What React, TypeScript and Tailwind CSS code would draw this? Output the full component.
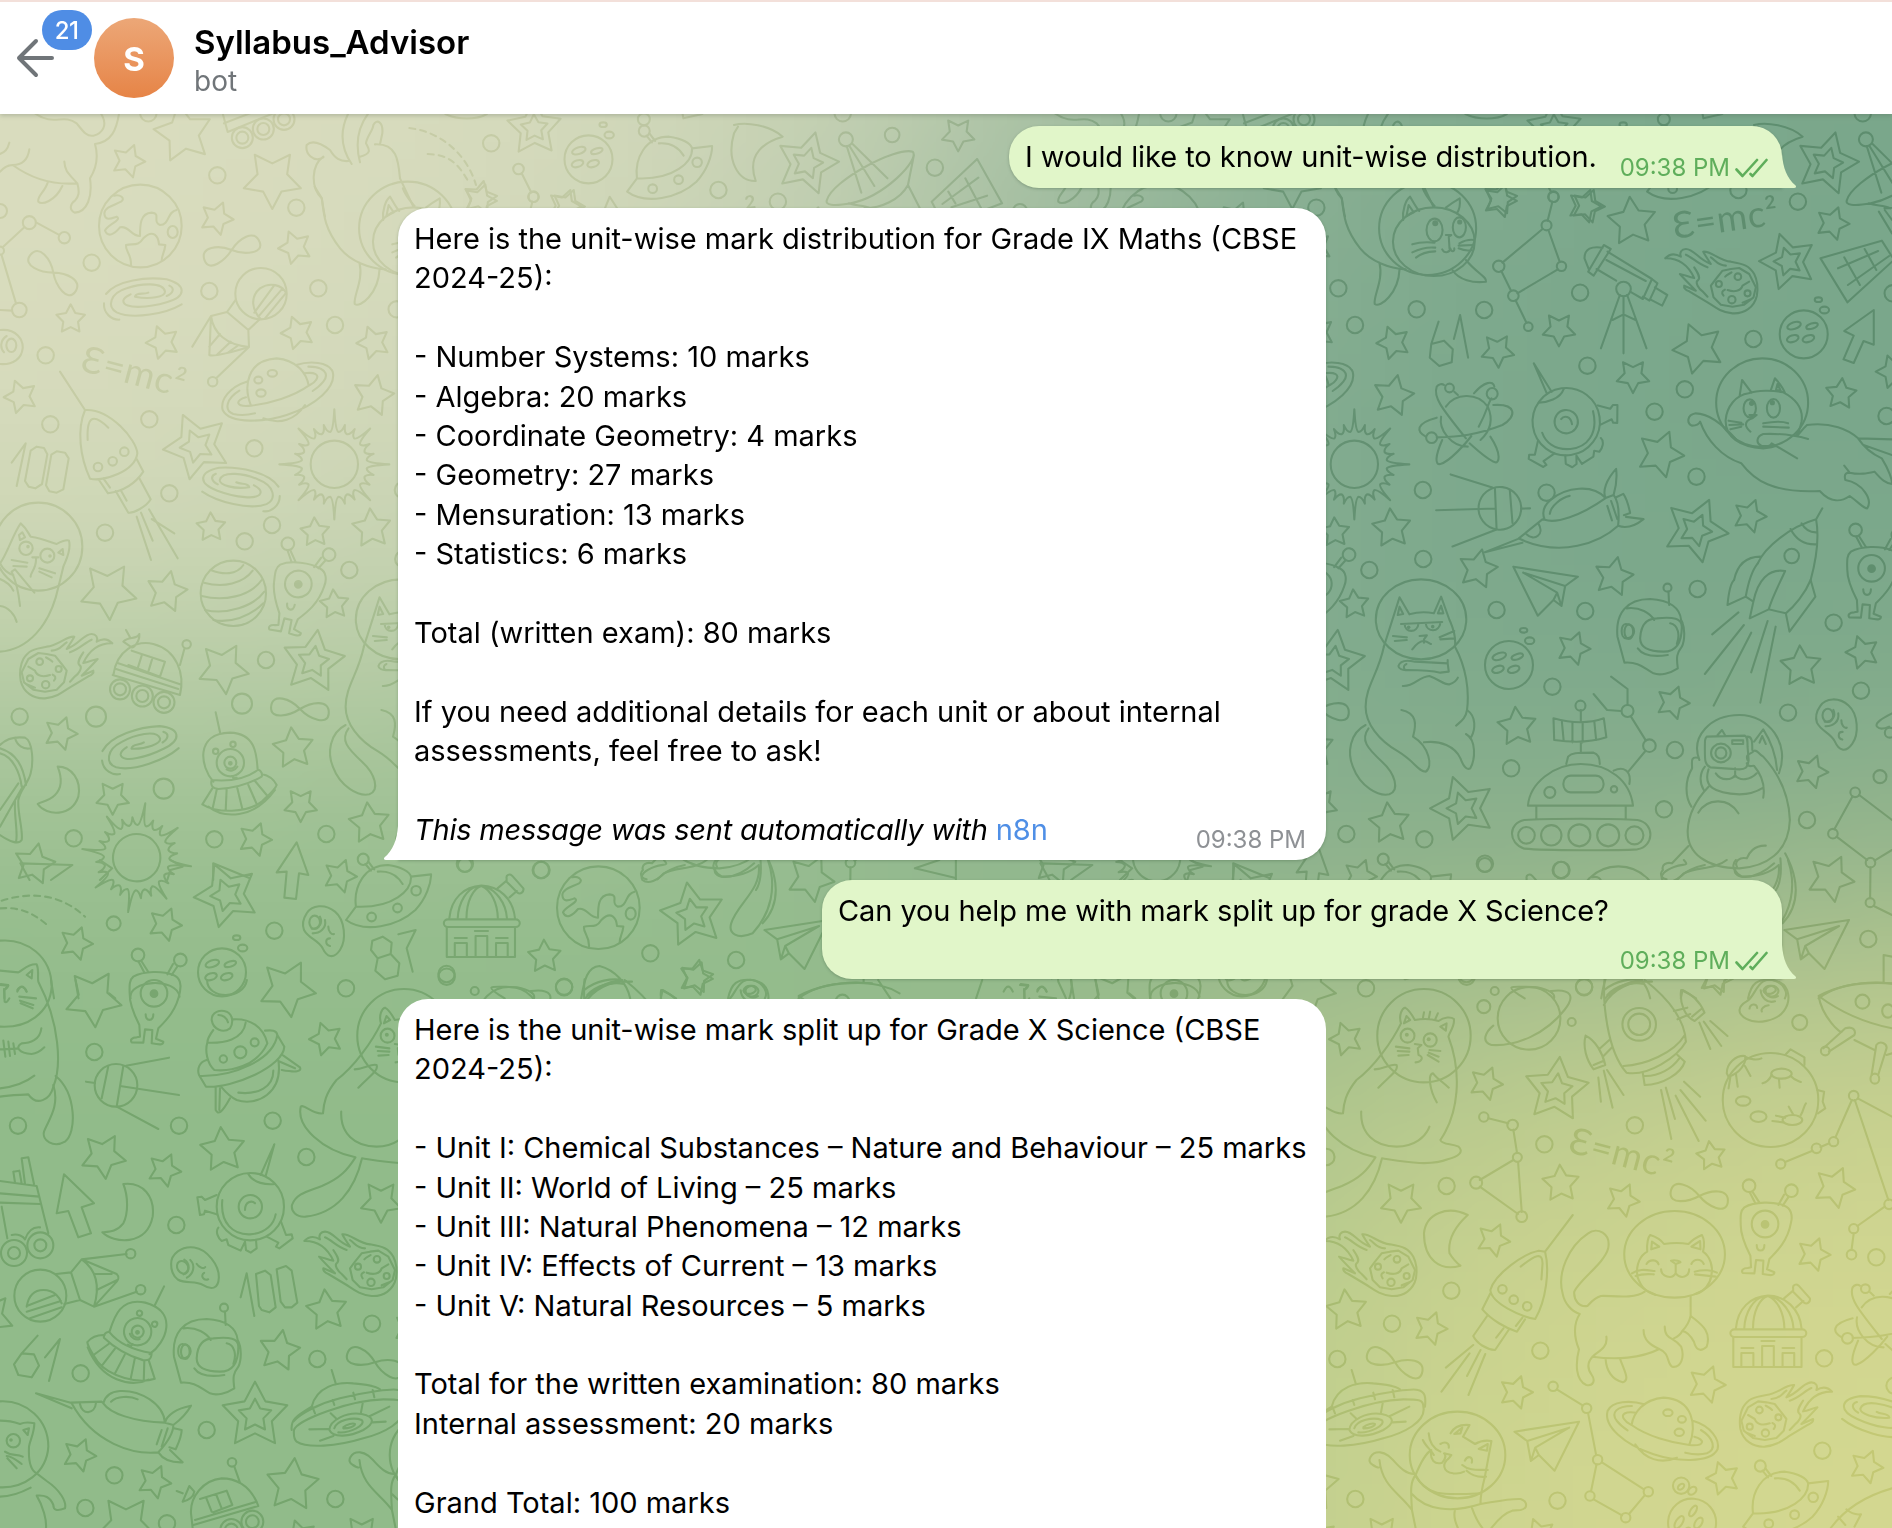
import React, { useEffect, useRef } from "react";

type Frame = { ox: number; oy: number; sx: number; sy: number };
const T = 1 / 3;
const A: Frame = { ox: 0, oy: 0, sx: T, sy: T };
const B: Frame = { ox: 0, oy: 110, sx: T, sy: T };
const C: Frame = { ox: 0, oy: 500, sx: T, sy: T };
const D: Frame = { ox: 0, oy: 880, sx: T, sy: T };
const E: Frame = { ox: 0, oy: 1200, sx: T, sy: T };
const F: Frame = { ox: 1320, oy: 180, sx: 0.3648, sy: T };
const G: Frame = { ox: 1320, oy: 560, sx: 0.3648, sy: T };
const H: Frame = { ox: 1320, oy: 940, sx: 0.3648, sy: T };
const I: Frame = { ox: 1320, oy: 1220, sx: 0.3648, sy: T };
const J: Frame = { ox: 370, oy: 780, sx: 0.6122, sy: T };
const K: Frame = { ox: 390, oy: 100, sx: 0.3954, sy: T };

const px = (f: Frame, x: number) => f.ox + x * f.sx;
const py = (f: Frame, y: number) => f.oy + y * f.sy;

/* x, y, radius, rotation, 1 when the star is doubled */
type S = [number, number, number, number, number?];
const stars: [Frame, S[]][] = [
  [B, [[385, 153, 17, 20], [550, 70, 30, 62], [817, 207, 30, 36], [650, 325, 17, 22], [885, 412, 17, -22], [212, 628, 15, 0], [488, 697, 17, -20], [893, 668, 17, -20], [1120, 698, 17, -20], [1120, 857, 21, 12], [62, 860, 17, -20], [590, 1008, 34, -24, 1]]],
  [C, [[633, 82, 15, -2], [945, 97, 15, -3], [1115, 85, 20, -5], [325, 273, 29, 33], [500, 275, 21, 12], [1003, 313, 15, -5], [670, 505, 26, 30], [940, 485, 32, 8, 1], [182, 700, 17, 20], [880, 745, 21, -6], [338, 893, 17, 36], [902, 915, 17, 36], [765, 1018, 17, 20], [1108, 970, 21, -6], [103, 1092, 21, 12], [1020, 1128, 17, 20]]],
  [D, [[680, 45, 33, -22, 1], [495, 133, 17, 22], [228, 190, 17, 20], [280, 355, 29, 32], [862, 325, 29, 28], [978, 477, 17, -19], [310, 828, 23, 30], [493, 870, 17, 24], [668, 810, 23, -5], [1143, 965, 21, 36]]],
  [E, [[980, 331, 21, -6], [838, 452, 21, 10], [765, 647, 34, 0, 1], [238, 765, 17, 22], [463, 845, 17, 24], [877, 855, 27, 5], [378, 975, 30, 36], [-30, 350, 24, 40], [900, 1010, 17, -18], [1085, 1003, 19, 36]]],
  [F, [[493, 62, 17, 19], [725, 78, 17, 20], [855, 125, 25, -5], [1405, 130, 17, 20], [1283, 245, 29, -17, 1], [487, 512, 17, 33], [655, 448, 17, 36], [1037, 505, 26, 50], [858, 588, 17, 36], [1428, 642, 16, 5], [933, 822, 24, 22], [1178, 1008, 17, 20], [1030, 1050, 33, 24, 1], [1570, 575, 17, -18]]],
  [G, [[433, 27, 20, 12], [805, 50, 20, 12], [695, 265, 17, 20], [1318, 319, 21, -3], [1487, 277, 17, -18], [967, 428, 17, 20], [540, 500, 20, -5], [1347, 635, 17, 20], [392, 745, 33, -18, 1], [1400, 955, 24, 26]]],
  [H, [[455, 430, 17, 22], [648, 449, 33, 6, 1], [1085, 115, 17, 20], [1072, 648, 15, -8], [660, 731, 19, -3], [830, 780, 17, 24], [1410, 742, 21, 24]]],
  [I, [[475, 60, 17, 24], [1353, 103, 17, 20], [303, 325, 17, 20], [537, 517, 17, 18], [1060, 493, 19, 20], [1105, 775, 17, -18], [1498, 740, 17, 22], [600, 945, 17, -20]]],
  [J, [[527, 405, 33, -10, 1], [285, 530, 17, -2], [533, 590, 17, 10]]],
  [K, [[1055, 190, 32, 15, 1], [1437, 103, 17, 36], [365, 85, 28, -2, 1], [228, 293, 17, 12], [450, 318, 17, 20]]],
];

/* x, y, radius */
type O = [number, number, number?];
const dots: [Frame, O[]][] = [
  [B, [[652, 196], [889, 293], [275, 458], [628, 543], [955, 535], [1005, 645], [137, 736], [151, 943], [448, 928], [763, 1015], [508, 1150], [445, 10], [0, 303, 7], [88, 338, 6.5], [193, 383, 5.7], [58, 600, 7.3], [0, 422, 4], [638, 815, 4.7], [783, 551, 25.7], [373, 1025, 4.3], [338, 1054, 4.3], [294, 1071, 4.3], [727, 83, 10.5], [727, 83, 6], [790, 57, 10.5], [790, 57, 6], [852, 28, 10.5], [852, 28, 6]]],
  [C, [[315, 98], [734, 124], [816, 75], [1048, 210], [798, 480], [59, 650], [288, 650, 10], [726, 611, 10], [491, 866, 10], [221, 1015], [643, 1018], [979, 1002], [115, 140, 44], [78, 145, 6.7], [142, 167, 7], [560, 433, 4.2], [360, 568, 10], [360, 568, 6], [427, 588, 10.5], [427, 588, 6], [492, 607, 10.5], [492, 607, 6], [700, 280, 32.7]]],
  [D, [[341, 130, 7], [823, 152], [1038, 325], [283, 516], [54, 737], [537, 737], [818, 722], [919, 831], [529, 1035], [670, 537, 3.7], [721, 517, 6], [764, 487, 4]]],
  [E, [[1116, 371], [952, 477], [242, 520], [620, 690], [343, 826], [256, 924], [501, 970], [1006, 897], [42, 159, 13], [42, 159, 6], [121, 136, 13], [121, 136, 6], [121, 287, 26], [392, 161, 4.7], [422, 269, 4.7], [40, 722, 6.7], [696, 787, 4.3], [757, 965, 11], [757, 965, 6.4], [694, 990, 11], [694, 990, 6.4]]],
  [F, [[713, 338], [265, 388], [450, 390], [733, 557], [1188, 477], [1000, 628], [917, 695], [1032, 890], [282, 930], [621, 938], [1310, 65], [1147, 30], [1553, 708], [283, 1137], [1570, 340], [640, 50, 5.3], [621, 136, 5], [490, 259, 5.7], [662, 259, 4.7], [530, 347, 5.3], [571, 440, 4.3], [832, 327, 7.3], [1293, 1128, 7.3]]],
  [G, [[484, 150], [727, 153], [1035, 87], [637, 380], [973, 570], [1408, 188], [1483, 392], [1283, 458], [524, 625], [943, 748], [1335, 780], [1535, 650, 6.5], [286, 838], [452, 911], [662, 930], [1503, 1137], [714, 437, 5], [843, 453, 6], [903, 557, 6.3], [630, 697, 5.5], [806, 688, 3.2], [566, 826, 8.3], [634, 826, 10.2], [711, 826, 11], [790, 826, 11], [862, 826, 9], [1467, 697, 4.8], [1406, 821, 4.8], [1509, 908, 4.8], [1508, 1028, 4.5], [1562, 518, 5]]],
  [H, [[479, 153, 4], [449, 200, 6.5], [724, 142], [690, 246, 4], [1315, 247, 7.5], [615, 613], [863, 556], [347, 738], [402, 110], [449, 531, 4.7], [528, 555, 5.3], [541, 652, 4.5], [428, 728, 6], [553, 830, 5.4], [1263, 672, 4.6], [1361, 625, 4.8], [1408, 605, 4.6], [1463, 467, 4.8], [1560, 793, 4.8], [1463, 866, 4.6]]],
  [I, [[360, 212], [604, 392], [1382, 415], [1377, 692], [990, 797], [651, 842], [1525, 112], [1575, 497], [1457, 104, 4.8], [639, 499, 4.7], [731, 565, 4.7], [761, 719, 4.7], [740, 828, 4.7], [900, 815, 4.7], [838, 893, 4.7], [500, 208, 4.3], [531, 239, 4.3], [568, 259, 4.3]]],
  [J, [[279, 270], [125, 582], [458, 520], [598, 540], [317, 620], [155, 255, 7]]],
  [K, [[256, 130], [1270, 105, 7.3], [1378, 203], [325, 207, 5.3], [363, 291, 5], [1153, 118, 7], [1145, 40], [642, 58, 6]]],
];

/* x, y, rx, ry in frame units */
const ovals: [Frame, number[][]][] = [
  [B, [[34, 706, 15, 20]]],
  [F, [[295, 145, 133, 140], [312, 185, 112, 103], [314, 150, 22, 34], [382, 142, 18, 30], [1212, 668, 126, 133], [1178, 685, 17, 27], [1243, 685, 18, 28]]],
  [G, [[277, 178, 124, 120], [1099, 579, 27, 28], [1099, 579, 15, 17]]],
  [H, [[285, 287, 128, 140], [240, 287, 19, 21], [302, 300, 18, 20], [573, 235, 86, 94], [875, 253, 46, 49], [875, 253, 30, 32], [1487, 185, 19, 21], [1557, 213, 16, 20], [1385, 333, 12, 13], [1521, 416, 12, 15], [1235, 480, 131, 141], [1265, 401, 28, 15], [1160, 483, 20, 14], [1202, 530, 22, 16], [1295, 540, 27, 15]]],
  [I, [[972, 103, 138, 130], [377, 705, 131, 130]]],
];

const pupils: [Frame, number[][]][] = [
  [C, [[84, 140, 1.8], [150, 168, 1.8]]],
  [E, [[33, 720, 1.8]]],
  [F, [[316, 130, 3], [383, 126, 2.6], [1183, 670, 2.6], [1240, 668, 2.6]]],
  [G, [[243, 202, 1.8], [309, 200, 1.8]]],
  [H, [[238, 284, 2], [298, 298, 2]]],
];

const lines: [Frame, string][] = [
  [B, "M105 10C160 50 190 10 230 40C250 65 260 80 280 77C310 70 320 45 308 20L300 5M358 5C350 60 335 95 285 102C293 130 295 165 270 205C278 260 262 305 225 308C205 300 212 280 225 272C235 260 240 250 232 220C170 225 100 210 38 165C20 165 10 175 0 185M28 98C22 120 15 125 0 132M88 118C84 145 70 165 38 165M193 155C195 185 205 190 232 220M143 218C135 245 110 260 115 275C125 285 165 275 187 228"],
  [B, "M73 352L8 412M108 337L176 374M5 436L48 580M0 600L36 602"],
  [B, "M763 608L822 527M775 620L848 535M795 625L857 550M782 627C755 600 750 560 780 535C810 515 845 525 858 548M708 568L681 606L745 660L780 627M633 618L681 606M633 618L577 710M633 618C640 670 680 705 747 711L745 660M633 618L628 735C640 742 700 725 747 711L650 803M628 710L660 672M650 735L692 695M685 727L712 708"],
  [B, "M180 785L255 900C330 895 410 990 412 1030C405 1085 310 1115 270 1106C240 1040 230 960 255 900M263 990C260 925 275 905 325 953M410 1047L430 1085C400 1130 360 1145 324 1150L297 1110M310 1105L330 1133M418 1105L452 1168M347 1143L385 1208C400 1210 440 1190 452 1168M362 1140L380 1172"],
  [B, "M35 1058L77 1000L50 1128M110 1010L132 1014L142 1033L126 1122L106 1135L86 1130L75 1113L92 1022ZM170 1024L195 1028L206 1045L190 1138L170 1148L148 1144L138 1126L154 1034Z"],
  [B, "M668 10L683 66L820 10M672 40L750 10"],
  [B, "M970 140C935 165 930 230 965 265C970 290 972 310 975 320M970 142C940 160 915 130 920 105C940 85 970 105 990 120C1005 145 1020 155 1045 153M1055 162C1020 110 1020 60 1045 10M1080 157C1065 100 1075 50 1105 10M1080 140C1120 130 1105 115 1098 100C1100 80 1120 60 1120 45C1130 25 1150 35 1147 70L1140 103M1125 103C1190 100 1195 150 1200 205L1240 290"],
  [B, "M0 660C50 655 70 690 68 715C65 745 40 765 0 762M20 678C0 690 0 715 12 727"],
  [C, "M410 50L453 180M423 38L458 122M447 28L533 175M455 57L523 100"],
  [C, "M0 190C20 165 40 100 62 70C80 85 85 100 92 110C130 115 160 130 170 132C180 125 200 118 207 122C215 155 195 185 190 200L175 262C150 380 80 450 0 455M60 120L57 105L67 97L75 112ZM175 158L188 147L190 165Z"],
  [C, "M35 180L82 188M40 198L80 200M118 205L165 220M118 215L155 232M97 172L115 172M108 175C110 205 90 220 92 230M0 190C10 210 20 220 40 225M103 278L45 208L35 215C55 260 58 300 60 318M0 237C20 245 35 260 40 272M0 318C25 320 45 345 50 366"],
  [C, "M340 525C350 450 410 420 460 432C530 450 555 520 540 585L338 525M348 507L535 567M355 490L540 553M395 452L495 485L480 530L385 495M425 467L413 505M457 475L445 515M378 390L390 412M370 425C385 408 410 420 418 402C420 425 400 445 395 442ZM540 495L553 447"],
  [C, "M0 735C20 715 50 710 75 713C100 725 100 790 92 820C85 850 60 870 55 900C52 940 70 990 65 1020C55 1035 30 1025 0 1005M45 713C50 735 70 750 92 745M0 745C50 760 70 800 78 855M0 760C40 770 60 820 65 860M0 930L55 850M0 980L68 860M45 905C42 950 55 1000 48 1025"],
  [C, "M173 800C185 830 190 860 165 885C145 905 120 905 113 912C140 950 215 950 235 890C245 840 215 800 173 800Z"],
  [C, "M890 1027L925 1125L897 1120L888 1197L853 1193L860 1115L830 1117Z"],
  [C, "M632 210C670 225 710 225 730 195M612 248C670 265 730 250 758 212M605 288C670 305 750 290 785 240M615 330C680 345 760 320 793 275M640 360C690 370 750 350 790 310"],
  [D, "M0 182C80 175 155 230 155 320C150 400 80 445 0 440M0 272L55 277C70 270 85 250 110 253C118 270 112 290 115 305C180 430 185 560 160 620C150 660 110 680 85 643C60 645 30 645 0 650M80 285L97 270L95 295ZM52 330C60 315 75 320 80 335M58 350L108 355M60 362L100 375M62 370L98 385M0 315L25 317C22 325 15 330 12 327L14 365C20 370 25 360 28 355"],
  [D, "M124 445C120 480 90 490 65 490C45 500 55 520 95 522C115 520 125 510 133 502M0 508L55 505M10 482L16 530M25 485L30 528M40 490L45 522M0 625C50 620 80 605 103 587M167 588C230 640 230 760 195 785C160 805 125 780 132 755C145 720 180 680 160 615"],
  [D, "M1148 170L1175 188L1172 222L1133 235L1113 210L1117 182ZM1172 222L1198 250L1193 287L1155 298L1126 272L1133 235M1195 163L1247 150L1220 205L1238 275"],
  [D, "M635 420C635 395 660 388 680 395C700 405 700 430 690 445C670 460 640 450 635 420M655 405C670 405 680 415 684 427M700 418C750 415 790 440 802 490C770 560 690 575 643 570C620 550 615 510 622 488C670 490 730 480 737 428M640 450C625 470 622 480 622 488M795 452C815 450 830 450 832 465L853 500C850 560 700 625 618 620L597 585C590 565 600 545 620 540M832 465C820 540 700 590 600 588M835 540C850 640 770 680 710 660C690 650 680 640 665 622M820 572C820 620 775 645 715 638M845 523L900 562C905 575 890 578 845 570M840 545L885 565M647 622L647 690C655 705 665 700 690 655M660 625L658 690"],
  [D, "M0 903L110 918L135 1020M0 940L118 950M0 968L120 972M65 835L85 832L102 912M40 875L58 872L65 910M65 835L75 912M40 875L45 907M192 883L170 1000L205 993L235 1072L273 1060L245 982L282 970ZM370 912C385 950 385 1000 370 1030C350 1055 330 1055 307 1057C340 1090 440 1100 458 1010C465 950 430 905 370 912Z"],
  [E, "M135 60L145 100M5 20L22 115M35 105C55 100 70 110 75 118C85 90 100 80 120 82"],
  [E, "M80 320C85 290 100 270 130 270C165 270 180 295 185 310M80 318L165 285M80 335L183 303M90 355L185 322M168 222L213 217M193 312L240 300M213 217L245 178L380 162M213 217L240 300L282 320L410 275M245 178C290 210 300 260 282 320M245 178L350 222C358 230 355 240 350 245L282 320M282 222L335 222M290 270L352 240"],
  [E, "M722 292L740 220L763 348M768 222L795 212L812 225L827 322L808 337L785 330L777 318ZM830 208L858 198L875 212L892 308L875 322L855 322L842 305Z"],
  [E, "M113 407L65 460L102 463L117 497L95 532L55 525L42 493L65 460M135 472L180 417L147 543"],
  [E, "M880 665C900 640 960 610 1020 595C1100 575 1180 565 1194 570C1215 575 1218 590 1215 620M875 690C872 660 885 650 935 620C950 560 1010 545 1060 550C1100 553 1130 560 1140 568M890 725C920 745 1010 740 1090 715C1150 700 1220 665 1210 620C1210 600 1200 598 1150 598C1050 600 890 660 882 690C880 710 885 720 890 725M995 510L1008 553M937 620L945 640M998 600L1003 615M1060 578L1065 598M1118 570L1123 592M928 688L985 687M992 640L1010 657M1083 637L1088 610M1110 648L1168 620M1118 667L1157 665M960 722L1000 708M988 690C990 660 1040 635 1085 642C1125 650 1125 670 1090 690C1050 710 1000 715 988 690M1003 685C1010 660 1060 650 1085 660C1100 675 1050 700 1015 697M1030 682C1040 672 1060 668 1065 672C1065 680 1045 685 1030 685"],
  [E, "M0 604C80 600 145 660 145 740C140 820 70 865 0 862M0 890C30 890 60 880 92 863M0 662C20 662 40 665 60 672C75 665 95 668 103 670C103 700 90 720 87 740C85 780 90 810 110 820L140 843C180 870 200 905 195 925C170 935 160 930 160 915C150 890 135 885 110 887C130 920 140 960 138 984M70 690L87 685L83 705ZM15 755C35 770 50 760 68 770M20 768C40 770 55 785 65 792M22 775L50 805"],
  [E, "M703 800L720 848M775 918C750 850 700 835 665 835C610 840 570 890 573 940L578 984M775 918L580 975M770 905L585 960M530 873L548 880M548 905L568 858L583 875C580 890 570 900 548 905M600 897L680 872L697 915L640 937M618 892L635 935M648 882L665 925"],
  [F, "M228 120C225 90 235 60 247 50C255 65 265 85 272 93M237 108L243 75L257 97ZM345 83C360 70 375 60 383 55C385 75 382 90 375 100M345 165L360 165L353 170L355 205M335 208C340 220 355 220 357 205C360 218 370 215 368 205M253 193C270 187 290 185 314 188M253 217C270 208 290 200 316 203M263 233C275 222 290 215 316 214M382 190C395 182 410 178 422 180M380 197L420 195M380 205C395 212 410 212 416 210M40 20L60 55C65 110 70 150 110 205C140 245 190 265 235 268M163 248C175 300 145 350 150 372C165 385 215 340 218 268M363 270C380 300 420 310 455 305C458 290 430 280 400 240M282 25C290 50 305 65 314 78"],
  [F, "M637 65L624 122M610 147L500 248M626 150L657 245M497 273L524 333M541 340L652 268M536 361L566 428"],
  [F, "M737 268L725 235C725 205 745 198 775 203M778 195L797 207L750 287L735 275L778 195M785 240L893 303M788 215L910 297L885 357L850 335M758 267L812 302M910 297L925 310L903 362L885 350M918 322L952 345L938 377L905 358M822 345L770 505M832 350L832 520M842 345L895 505M802 420L832 403L865 420"],
  [F, "M1372 235L1540 182L1568 230M1372 235L1446 367L1568 245M1420 265L1530 213M1447 315L1560 228M1437 232L1480 315M1493 207L1525 270M1548 90L1568 120M1532 95L1568 160"],
  [F, "M325 425L305 492L340 482L364 508L361 547L327 558L301 533L305 492M367 477L384 405L406 533M1518 390L1437 453L1463 467L1435 538L1463 549L1490 483L1518 494Z"],
  [F, "M1215 805C1150 800 1110 770 1112 720C1115 680 1140 645 1175 640C1200 630 1240 630 1270 637C1310 660 1325 690 1320 725C1315 750 1310 760 1305 765M1150 650L1157 600L1183 638M1235 633L1247 595C1260 610 1270 625 1275 640M1250 630L1254 612L1263 632ZM1177 705L1197 705L1185 715C1160 725 1165 740 1180 755M1120 722L1155 728M1122 735L1160 733M1125 748L1155 740M1215 730C1240 725 1265 722 1283 730M1215 740L1285 743M1335 735C1400 725 1450 750 1475 775C1490 800 1510 820 1540 835C1560 870 1568 900 1568 910M1475 775L1568 778M1490 795L1568 825M1335 735C1325 745 1318 755 1310 765M1338 777C1300 765 1260 760 1215 762C1195 770 1195 790 1210 797C1225 800 1235 797 1238 790L1308 835M1215 805C1230 803 1240 802 1250 798M1142 780C1110 740 1070 700 1030 700C1005 705 1005 730 1020 737C1035 737 1040 730 1042 725C1060 780 1100 830 1155 850C1190 900 1240 940 1370 933C1400 970 1430 965 1452 948C1480 970 1490 985 1500 985C1515 960 1490 910 1440 900C1435 880 1445 878 1452 878C1480 885 1500 880 1520 875C1540 900 1550 910 1568 912M1437 857L1452 878"],
  [F, "M1377 985L1360 1018C1290 1040 1220 1100 1200 1150M1360 1018C1370 1080 1360 1140 1345 1200M1290 1047C1305 1080 1330 1095 1362 1093M1320 1030C1330 1050 1345 1058 1362 1057M1207 1130C1170 1130 1145 1150 1135 1200"],
  [G, "M1200 10C1185 30 1175 60 1167 110L1117 135C1120 100 1125 70 1135 60M1345 60L1358 110L1287 215L1277 160M1345 60C1330 100 1300 140 1277 160L1230 148M1275 33C1230 25 1200 60 1188 125L1178 175L1230 148C1240 110 1260 70 1275 33M1167 110L1188 125M1147 157L1075 223M1162 195L1055 342M1182 218L1079 437M1227 183L1182 337M1249 200L1207 428"],
  [G, "M175 260L218 112L245 163C270 155 290 155 312 160L332 110L355 180C370 215 372 240 370 260C400 320 410 390 403 450C400 475 385 485 373 497M213 165L218 140L228 162ZM323 160L332 137L338 160ZM222 192L335 186M232 192C232 220 268 220 270 190M290 190C292 218 328 218 330 188M273 228L293 226L285 238L285 248M253 268C265 250 275 243 285 243C295 245 300 250 304 252M200 228L238 232M205 243L238 240M328 232L368 213M330 238L368 235"],
  [G, "M175 260C160 340 125 380 125 440C125 490 160 540 215 575C260 605 270 635 290 635C310 620 300 560 255 530C265 490 265 460 223 450M285 547C330 540 370 560 385 595C395 625 405 630 412 625C425 600 430 540 400 522M403 450C430 470 425 510 415 530M125 495C80 520 75 580 90 620C110 680 160 710 190 703C220 690 205 640 170 605C130 565 110 540 133 505M215 318C220 300 240 300 260 305L350 310L353 335L330 338C300 330 270 330 240 330C225 332 215 325 215 318M227 378C260 380 270 350 300 348C330 360 340 375 355 373C370 368 375 360 378 353M237 312C230 315 228 322 232 328M350 300L350 312"],
  [G, "M570 737C575 670 640 612 715 612C790 612 850 660 858 737ZM593 740L593 777M838 740L838 777M675 612L680 590C690 578 700 578 750 578C765 582 767 600 767 612M715 545L715 578M715 450L715 485M640 475C690 490 740 490 778 475L785 532C740 548 690 548 642 540ZM663 485L668 542M692 488L692 547M720 488L720 547M752 485L757 540M805 632C830 618 855 630 848 672M845 635L892 573M893 541L852 469M843 435L843 387L798 350M825 453L787 450L750 402M560 780C620 775 810 775 870 780C920 790 915 860 870 868C810 872 620 872 560 866C515 850 515 790 560 780ZM688 647L755 647C785 647 785 697 755 697L688 697C660 697 660 647 688 647Z"],
  [G, "M1040 600C1015 530 1070 465 1150 465C1230 465 1290 550 1258 640M1060 530L1165 527C1172 530 1172 540 1172 560L1175 600C1172 625 1165 628 1150 628L1070 622C1055 615 1055 600 1055 570C1055 540 1055 535 1060 530ZM1172 530C1185 530 1185 545 1185 570M1130 541L1160 541L1160 552L1130 552ZM1090 525L1102 510L1110 525M1190 545L1215 508C1240 550 1250 590 1253 630M1205 548L1212 528L1222 552M1170 610C1175 625 1185 615 1190 618C1215 650 1220 680 1215 713M1172 600C1165 580 1180 585 1190 572C1200 570 1200 580 1215 590C1240 620 1285 680 1288 780C1285 880 1220 920 1150 925C1060 925 1005 880 1008 810C1010 760 1030 720 1065 680M1035 593C1015 590 1020 605 1020 625C1000 660 1000 710 1018 740M1055 620C1040 640 1040 670 1052 690M1065 628C1050 680 1080 700 1150 703C1180 703 1205 690 1215 683M1085 640C1100 665 1130 660 1138 645C1150 665 1180 660 1197 640M1138 625L1138 650M1037 758C1060 715 1120 710 1147 760M1010 858L965 910C950 905 935 915 940 930C930 940 935 955 950 958M980 958C1000 935 1030 920 1055 915M1222 857C1190 855 1175 880 1170 895C1150 890 1135 905 1143 920C1130 935 1140 945 1155 950C1190 955 1220 935 1245 910M1275 880C1310 950 1320 1030 1268 1090M1262 895C1265 930 1262 970 1250 990"],
  [G, "M1460 709L1410 808M1478 705L1568 780M1416 830L1500 900M1509 922L1508 1014M1520 902L1568 870M1518 1038L1568 1065M1568 460C1540 475 1520 490 1527 500C1535 510 1550 505 1560 500"],
  [H, "M222 250C215 225 225 205 233 203C245 210 255 230 260 240C285 235 310 238 325 243C340 230 360 230 367 237C370 260 355 275 352 290C390 400 380 520 330 600C335 615 360 610 380 620C395 635 380 650 350 658C300 680 230 665 170 655C150 750 100 820 15 830C-10 832 -25 815 -22 795C-10 760 20 755 60 738C110 715 130 690 152 652C60 630 -10 560 2 500C10 490 35 525 63 520C65 490 70 460 100 420C150 380 200 300 222 250M230 250L237 228L247 240ZM330 260L347 250L345 272ZM282 235L285 217M298 237L302 215M315 240L323 220M260 312L278 315L268 325L270 345C285 350 280 365 262 367M208 320L245 325M213 333L245 335M215 347L243 345M300 330L330 333M298 338L325 350M295 345L325 365M150 388C180 385 195 370 210 375C215 390 200 400 160 443M320 487C300 450 295 400 310 400C320 415 335 425 353 443M113 515C110 580 150 620 210 620C260 620 290 590 300 560"],
  [H, "M633 153C690 145 700 170 670 210C620 280 540 320 470 315C440 305 455 275 475 257"],
  [H, "M780 118C775 180 785 330 840 398C900 410 980 350 1003 305C1000 240 960 180 890 120M778 195C800 150 850 120 910 125M780 178C800 150 840 125 880 120M832 378C890 375 970 340 1000 285M885 400L890 435C940 435 990 400 1000 365L980 345M888 408C930 410 965 385 985 355M728 287C720 320 730 360 750 388L782 375C775 340 755 300 728 287M750 375L778 362M765 328L793 300M778 347L802 320M990 150C985 190 1000 230 1027 243L1054 218C1040 180 1015 160 990 150M1020 230L1045 207M970 213L1007 203M980 238L1015 222M763 413L770 485M778 392L802 503M787 390L832 465M1040 248L1070 327M1052 245L1100 318M1070 243L1117 288M935 450L963 597M948 443L973 537M975 467L1038 603M988 450L1057 542M998 425L1042 470"],
  [H, "M1367 168C1430 130 1500 125 1568 130M1367 168C1375 230 1430 285 1430 275M1367 168C1430 220 1500 250 1568 265M1380 325L1440 265C1460 258 1470 270 1465 285L1395 335M1465 300L1520 330M1512 405L1525 315C1535 300 1555 310 1553 325L1530 405M1553 345L1568 340M1545 125L1545 45L1568 50"],
  [H, "M1115 400C1115 370 1140 345 1165 348C1170 370 1150 400 1120 410ZM1275 345L1290 328L1328 352L1328 375M1363 450L1382 455L1378 485L1385 505L1365 520M1165 350C1180 360 1200 360 1210 355M1165 378L1180 408M1140 400L1145 440M1125 410L1120 445M1238 405C1230 425 1220 428 1213 430M1290 408C1300 420 1310 422 1318 426M1258 417L1260 443M1240 543L1270 547M1285 500L1298 525M1332 490C1325 500 1325 515 1318 525M1250 527L1275 533"],
  [H, "M461 535L516 550M530 569L540 638M530 660L438 720M543 666L553 816M438 740L543 822M1275 666L1350 632M1372 621L1396 610M1413 592L1458 480M1474 475L1568 530M1466 480L1558 780M1548 800L1473 858M1463 880L1457 930M405 825C370 860 350 900 355 940C360 950 375 970 385 977C330 995 285 960 285 880C290 820 350 795 405 825"],
  [I, "M693 -15L617 95C630 150 620 240 590 297C550 290 470 250 467 210C480 160 560 100 600 92L617 95M550 140C590 105 610 95 610 130L607 178M467 220L445 268C470 300 510 325 540 335L562 298M537 318L555 293M460 285L420 348C430 370 455 388 480 390L517 330M483 353L503 325M420 375L345 443M410 400L333 515M440 390L403 468M453 402L407 525"],
  [I, "M870 170C865 130 880 105 897 95C895 70 900 50 905 45C920 50 935 60 943 72C965 68 990 68 1010 72C1025 55 1040 48 1047 45C1055 60 1053 80 1050 95C1070 110 1078 140 1073 165C1070 190 1055 215 1030 222M870 170C880 200 890 215 920 225M908 88L910 65L930 80ZM1018 80L1042 63L1043 88ZM895 132C905 115 925 120 928 133M1018 132C1025 115 1045 115 1052 132M962 122C975 118 990 125 988 127L975 132ZM975 132L975 160M935 148C935 170 965 180 975 160C990 180 1012 170 1012 148M855 160C875 145 895 150 917 153M865 168C885 160 900 162 915 163M1027 155C1050 148 1075 150 1088 158M1028 163L1085 170"],
  [I, "M890 215C860 240 790 225 770 228C750 235 740 250 733 258C710 262 695 240 697 215C710 180 780 130 790 85C798 40 760 20 735 40C680 80 650 160 665 220C670 250 690 275 712 282C695 310 695 350 710 388C700 430 700 480 730 495C750 500 755 480 745 465C735 450 730 430 747 410C760 395 790 385 785 350M747 410C810 420 880 415 930 387C960 400 950 430 965 440C990 445 1000 410 990 380C970 350 945 360 945 320M887 330C887 360 905 375 930 387M1016 230L1016 287C1040 310 1075 330 1060 380C1040 400 1030 385 1025 365C1015 345 1005 335 993 333C990 340 980 350 970 355M1016 287C1012 310 1000 325 993 333M783 418C785 450 800 480 830 487C850 480 835 455 823 418"],
  [I, "M358 640C365 625 380 612 410 615L392 650L425 672C440 662 455 660 470 663L452 770C445 800 440 830 440 848M368 642L390 623L385 640ZM435 687L460 672L458 692ZM262 765C275 730 290 700 305 690C300 720 315 735 335 728C345 715 345 705 340 700L360 705L353 715C335 730 335 755 365 760C380 762 390 758 395 755M330 672C340 665 355 665 353 683M397 722C405 705 420 710 416 728M390 735C410 755 440 748 460 750M402 752C420 770 440 772 455 770M298 640C300 670 310 685 330 695M282 660C290 680 305 690 312 705M262 765C290 830 340 825 440 820M252 822C290 870 360 880 440 852C480 845 520 835 550 837C570 845 570 865 550 870L527 872C500 880 480 910 470 924M262 765C245 790 250 820 252 870C220 820 170 800 163 720M258 762C215 760 200 700 165 697C140 695 125 725 145 735C155 742 160 745 163 742M252 870L262 924M370 870C365 890 372 910 378 924M417 865C425 890 435 910 445 924"],
  [I, "M649 508L720 556M735 580L757 705M758 733L743 814M773 727L888 808M750 838L828 886M890 826L847 882M1400 924C1450 850 1520 820 1568 805M1420 890L1440 915M1443 868C1455 880 1470 885 1483 883L1465 920"],
  [J, "M345 655C350 600 355 560 375 558C400 570 420 610 425 655M350 630C370 600 395 595 412 600M355 645C370 615 395 605 415 612M475 655L478 630L500 655M585 655C590 610 600 595 625 600C645 610 650 640 645 655M610 632C612 610 632 615 630 632C625 645 612 645 610 632M700 655C740 600 820 590 865 640M830 600L850 655M1190 655L1185 600M1240 640L1250 655M1275 655C1270 600 1350 590 1355 650M1400 600C1400 660 1460 660 1465 600M1000 600L990 655M1145 600L1150 655M1035 635C1040 615 1045 615 1050 635M1090 635C1095 615 1100 615 1105 635M1063 612L1075 615L1069 630L1069 655M220 655C180 610 200 620 240 622C260 630 270 640 268 655"],
  [J, "M445 300C440 285 450 270 465 260C480 250 490 260 480 240M445 300C455 315 470 300 480 280C500 260 530 270 550 240M565 240C555 260 565 280 575 290C600 290 620 280 635 255M650 240C665 320 655 400 625 460C600 480 585 460 590 430C600 370 640 330 635 255M890 265L930 240M957 240L957 300M890 265L955 293M1095 250L1110 300M1095 250L1180 255L1145 300M1225 240L1245 265L1225 300M1340 240L1360 260L1340 270L1335 300M1410 250L1410 300M1410 250L1470 295"],
  [K, "M1105 300C1120 240 1280 140 1322 155C1340 180 1250 290 1165 310C1120 320 1100 315 1105 300M1325 165L1310 255C1290 300 1240 325 1200 325M1160 310C1180 318 1200 315 1215 325M1310 255L1340 325M1155 138L1192 278M1162 138L1225 258M1170 132L1258 235M333 220L357 277M1485 177L1548 310L1470 345M1485 177L1370 305L1385 340M1397 312L1488 233M1420 322L1510 287M1412 275L1430 310M1455 235L1495 325M140 42C170 60 220 60 245 42M740 42L742 55L790 42M870 75C900 65 960 75 993 110C950 125 900 160 925 243C880 245 850 180 870 100L880 80"],
];

const dashes: [Frame, string][] = [
  [A, "M1228 384C1320 395 1400 460 1428 555M1283 462C1340 465 1370 480 1408 550"],
  [D, "M5 62C90 35 180 40 255 110M0 85C60 80 100 100 138 132"],
];

function starPath(r: number) {
  let d = "";
  for (let i = 0; i < 10; i++) {
    const q = i % 2 ? r * 0.52 : r;
    const a = (i * Math.PI) / 5;
    d += (i ? "L" : "M") + (Math.sin(a) * q).toFixed(1) + " " + (-Math.cos(a) * q).toFixed(1);
  }
  return d + "Z";
}

function sunPath() {
  const n = 24;
  const pt = (deg: number, r: number) => {
    const a = (deg * Math.PI) / 180;
    return (Math.sin(a) * r).toFixed(1) + " " + (-Math.cos(a) * r).toFixed(1);
  };
  let d = "M" + pt(-7.5, 98);
  for (let i = 0; i < n; i++) {
    const t = i * 15;
    const r = i % 6 === 0 ? 165 : i % 3 === 0 ? 152 : 122;
    d += "Q" + pt(t - 2, 100) + " " + pt(t, r) + "Q" + pt(t + 2, 100) + " " + pt(t + 7.5, 98);
  }
  return d + "Z";
}

type SymProps = { id: string; cx: number; cy: number; wide?: boolean; children: React.ReactNode };
const Sym = ({ id, cx, cy, wide, children }: SymProps) => (
  <g id={id}>
    <g transform={`${wide ? "scale(1.0945 1) " : ""}translate(${-cx} ${-cy})`}>{children}</g>
  </g>
);

/* id, frame, x, y, rotation, mirrored */
type P = [string, Frame, number, number, number?, boolean?];
const placed: P[] = [
  ["comet", E, 1125, 213], ["comet", F, 1140, 325], ["comet", C, 125, 520, 0, true], ["comet", I, 1210, 605, 0, true],
  ["alien", D, 462, 340], ["alien", C, 895, 252, 8], ["alien", F, 1512, 1165], ["alien", H, 1220, 852],
  ["loop", B, 160, 488, 37], ["loop", B, 695, 420, -21], ["loop", C, 900, 627, 4], ["loop", E, 1125, 487, 17], ["loop", H, 1040, 768, 8],
  ["globe", B, 421, 348], ["globe", J, 373, 383],
  ["galaxy", B, 428, 560], ["galaxy", B, 725, 1130, 4, true], ["galaxy", C, 417, 742, -10], ["galaxy", I, 1540, 590, 8, true],
  ["ringed", B, 832, 840], ["ringed", I, 940, 628, 0, true],
  ["sun", B, 1003, 1063], ["sun", C, 410, 1073, 9],
  ["pod", C, 691, 788], ["pod", E, 413, 395, 14, true],
  ["crater", D, 666, 277], ["crater", F, 1326, 463], ["crater", G, 518, 315], ["crater", K, 502, 178], ["crater", I, 1020, 908, -40],
  ["bean", D, 970, 155], ["bean", E, 585, 212, -32], ["bean", G, 1415, 495, 2], ["bean", H, 1215, 182, 85],
  ["saucer", D, 1175, 35], ["saucer", K, 715, 190], ["saucer", I, 1285, 835],
  ["sputnik", D, 348, 616], ["sputnik", F, 493, 985, 7, true],
  ["probe", D, 751, 980], ["probe", F, 675, 725, -8, true],
  ["helmet", E, 620, 455], ["helmet", G, 905, 215],
  ["shuttle", E, 380, 670], ["shuttle", F, 700, 1025, -37],
  ["plane", G, 620, 80], ["plane", I, 620, 665, 0, true], ["plane", G, 1360, 1140, 0, true],
  ["dome", I, 1228, 335], ["dome", J, 182, 425],
  ["atom", F, 400, 723], ["atom", I, 1540, 305],
];

const mass: [Frame, number, number, number][] = [[B, 400, 790, 15], [F, 1112, 122, -8], [H, 825, 645, 15]];

function Symbols() {
  return (
    <defs>
      <Sym id="comet" cx={1125} cy={213}>
        <path d="M913 123C930 105 950 112 960 118C955 105 962 95 975 95C1000 95 1010 125 1050 140C1040 125 1030 110 1027 103C1050 100 1075 130 1110 133C1150 140 1165 145 1180 170C1190 190 1192 210 1188 235C1180 270 1150 290 1115 288C1080 285 1060 268 1040 255L985 222C975 218 968 213 970 205L1005 220C990 205 975 190 957 170C970 172 985 180 1000 182C985 150 960 122 913 123ZM975 112C995 120 1010 140 1040 150M1050 120C1065 130 1070 145 1095 145M1000 150C1010 165 1020 180 1012 188C1000 195 1015 215 1025 222L1040 238" />
        <path d="M1110 155L1085 160L1065 185L1050 205L1058 240L1080 262L1115 268L1150 262L1178 240L1185 210L1165 170L1135 152ZM1100 218C1120 225 1140 222 1145 205L1165 193M1088 235C1080 225 1085 220 1092 217M1145 256L1170 246M1093 178C1100 170 1105 170 1112 165" />
        <circle cx="1131" cy="178" r="10" /><circle cx="1074" cy="200" r="9" /><circle cx="1160" cy="228" r="9" /><circle cx="1113" cy="247" r="11" />
      </Sym>
      <Sym id="alien" cx={462} cy={340}>
        <circle cx="414" cy="225" r="19" /><circle cx="541" cy="240" r="19" /><circle cx="462" cy="340" r="40" /><circle cx="462" cy="341" r="10" fill="black" />
        <path d="M424 243L445 276M416 245L432 276M519 252L502 283M533 258L515 285M400 290C430 272 490 272 520 285C540 292 545 315 540 335C530 390 500 420 475 445L468 476L490 485C490 495 480 495 455 490L457 450L435 448L430 488L395 487C390 480 395 472 410 472L420 470L418 435C400 400 388 370 389 340C388 315 388 300 400 290ZM437 403C437 425 460 425 460 403" />
      </Sym>
      <Sym id="loop" cx={0} cy={0}>
        <path d="M-87 0C-87 -45 -30 -28 0 0C30 28 87 45 87 8C87 -38 30 -22 0 0C-30 22 -87 40 -87 0Z" />
      </Sym>
      <Sym id="globe" cx={421} cy={348}>
        <circle cx="421" cy="348" r="124" /><ellipse cx="518" cy="366" rx="15" ry="18" />
        <path d="M342 257C360 252 378 265 363 275C345 285 315 290 313 310C315 335 335 325 350 320C368 330 320 345 315 362C325 385 345 370 360 352C385 345 395 380 420 378C420 345 420 310 455 308C485 310 455 335 480 345C510 345 500 305 530 300M393 467C395 430 375 425 378 405C400 400 415 410 430 385C460 355 475 380 477 403L496 405C493 430 485 435 485 452" />
      </Sym>
      <Sym id="galaxy" cx={428} cy={560}>
        <path d="M318 552C350 510 440 500 500 508C560 525 560 560 500 577C450 592 370 600 370 572C372 560 390 555 392 553M445 548C430 555 410 545 405 560C450 570 495 560 495 545C490 515 420 520 380 535C330 550 320 590 350 607C400 630 500 610 545 583M508 527C525 535 520 550 500 558M312 580C310 610 335 630 358 629" />
      </Sym>
      <Sym id="ringed" cx={832} cy={840}>
        <path d="M753 887C730 830 740 750 830 745C890 750 920 790 926 827C880 860 810 880 753 887ZM740 815C690 830 660 870 668 900C690 945 800 935 860 915C950 885 1010 830 998 785C985 755 930 752 888 765M718 842C680 865 670 900 700 912C720 917 745 915 765 910M738 862C705 870 705 892 753 887M925 770C970 770 990 790 970 815C960 828 950 835 938 843M912 790C945 785 960 795 948 810C942 820 935 822 926 827M790 925C840 945 885 930 915 885" />
        <ellipse cx="775" cy="810" rx="12" ry="10" /><ellipse cx="817" cy="790" rx="14" ry="10" /><ellipse cx="783" cy="849" rx="14" ry="11" />
      </Sym>
      <Sym id="sun" cx={0} cy={0}>
        <circle r="71" /><path d={sunPath()} />
      </Sym>
      <Sym id="pod" cx={691} cy={788}>
        <path d="M640 845C600 800 585 700 690 698C770 700 770 770 773 810M635 840C630 860 640 865 655 867C700 865 750 850 785 830C790 815 775 808 773 810C740 835 690 845 635 840M637 865L607 913C650 940 740 940 785 905C800 890 825 870 830 855C820 835 800 825 785 822M625 920C670 955 760 960 825 870M650 870L638 925M680 867L677 932M712 865L727 927M745 855L770 912M765 843L800 885M660 697L647 637M680 808C690 815 705 812 712 800M697 828L700 835L710 833" />
        <circle cx="691" cy="788" r="41" /><circle cx="691" cy="788" r="18" /><circle cx="691" cy="790" r="4" fill="black" /><circle cx="647" cy="754" r="8" /><circle cx="699" cy="733" r="8" />
      </Sym>
      <Sym id="crater" cx={666} cy={277}>
        <circle cx="666" cy="277" r="72" /><ellipse cx="637" cy="251" rx="21" ry="10" transform="rotate(-18 637 251)" /><ellipse cx="691" cy="252" rx="18" ry="8" transform="rotate(-18 691 252)" /><ellipse cx="633" cy="290" rx="18" ry="10" transform="rotate(-18 633 290)" /><ellipse cx="680" cy="290" rx="18" ry="10" transform="rotate(-18 680 290)" /><ellipse cx="710" cy="173" rx="11" ry="7" /><ellipse cx="728" cy="204" rx="14" ry="10" />
      </Sym>
      <Sym id="bean" cx={970} cy={155}>
        <path d="M920 100C935 75 975 70 1005 95C1035 120 1040 180 1020 210C1000 240 980 230 968 205C955 180 925 175 912 150C905 130 910 115 920 100ZM975 120C980 145 960 160 938 160M960 110C970 130 955 148 935 146M985 140C985 155 995 165 1002 162M990 175C975 175 975 195 990 198" /><ellipse cx="944" cy="127" rx="16" ry="20" />
      </Sym>
      <Sym id="saucer" cx={1285} cy={835} wide>
        <path d="M1187 880C1180 820 1210 755 1275 755C1310 760 1335 775 1338 790C1340 830 1290 885 1187 880L1160 920C1210 960 1300 940 1350 890C1380 855 1393 810 1393 783L1338 790M1247 775C1280 772 1300 785 1315 812M1228 772L1213 752M1237 768L1221 745" />
        <ellipse cx="1207" cy="738" rx="15" ry="17" /><ellipse cx="1352" cy="832" rx="13" ry="14" /><ellipse cx="1301" cy="884" rx="12" ry="13" /><ellipse cx="1230" cy="911" rx="12" ry="13" />
      </Sym>
      <Sym id="sputnik" cx={348} cy={616}>
        <circle cx="348" cy="616" r="64" /><path d="M325 558L305 655M370 558L350 680M378 557L507 533M360 618L537 645M350 680L475 747M258 605L285 609" />
      </Sym>
      <Sym id="probe" cx={751} cy={980}>
        <circle cx="751" cy="980" r="101" /><circle cx="751" cy="980" r="35" />
        <path d="M667 960C660 1030 700 1065 750 1063C800 1060 822 1030 827 1003M745 882C760 910 800 915 825 912M782 885L823 793L797 888M650 945L615 960L605 950L592 952L600 1005L612 1003L615 992L650 1003M735 990C735 965 755 960 765 970M655 1043C645 1055 655 1075 665 1083L680 1078L685 1095L722 1112L735 1085M735 1085L738 1110L752 1118L770 1105L768 1080M800 1070L835 1088L828 1100L838 1105L878 1075L875 1063L858 1065L843 1025" />
      </Sym>
      <Sym id="helmet" cx={620} cy={455}>
        <path d="M543 548L522 470C515 400 550 357 620 357C680 360 710 385 713 420C725 440 725 480 715 500C700 520 698 530 703 565C680 580 650 588 630 580C600 565 590 545 543 548M590 475C592 435 610 415 640 415C690 410 715 415 715 440C715 480 705 515 660 515C610 515 590 500 590 475M680 430C705 435 710 465 700 492M583 505C600 530 640 530 673 525M550 385C590 380 620 400 632 420M548 432C530 430 530 475 548 475C580 475 580 432 548 432M675 335L677 375" /><ellipse cx="556" cy="455" rx="13" ry="22" /><circle cx="672" cy="323" r="12" />
      </Sym>
      <Sym id="shuttle" cx={380} cy={670}>
        <path d="M108 580L215 625M108 580L212 608L305 605L310 610C330 640 400 665 495 668C490 610 420 570 360 573C330 575 315 590 310 610M495 668L520 675C520 700 500 730 475 757C400 765 280 730 215 610M240 612C245 645 285 645 288 608M333 605C350 588 390 587 413 598M495 668C500 645 530 625 573 617C560 640 540 660 520 675M522 685L545 690C545 710 535 730 527 748L508 742M475 757C490 780 520 788 548 787L510 750M485 690L470 733M503 685L485 740" />
      </Sym>
      <Sym id="plane" cx={620} cy={80} wide>
        <path d="M530 20L707 50L672 78L662 138L640 120L597 167ZM557 38L672 78M557 38L650 98L662 138M650 98L640 120" />
      </Sym>
      <Sym id="dome" cx={1228} cy={335} wide>
        <path d="M1140 325C1145 265 1180 230 1228 227C1275 228 1315 265 1320 325M1163 325C1165 275 1190 235 1215 230M1187 325C1187 275 1205 235 1228 228C1255 240 1272 280 1273 325M1298 325C1295 275 1265 240 1240 230M1133 352L1133 441L1320 441L1320 352M1155 441L1155 399L1188 399L1188 441M1212 441L1212 378L1244 378L1244 441M1268 441L1268 399L1300 399L1300 441M1155 384L1188 384M1210 363L1246 363M1268 384L1300 384M1272 235L1297 212M1305 262L1325 243M1297 205C1295 195 1305 190 1312 197L1343 235C1345 245 1335 255 1327 248L1297 215Z" /><rect x="1125" y="328" width="208" height="23" rx="11" />
      </Sym>
      <Sym id="atom" cx={400} cy={723} wide>
        <path d="M340 615C335 610 325 612 320 620C310 650 330 680 400 775M422 640C450 605 475 600 478 620M475 675C540 670 540 710 500 735C430 765 380 770 320 772M320 713C260 730 265 755 290 770M435 740C460 690 460 670 470 655M335 780C315 830 315 855 330 852C355 845 400 790 415 768M467 770C500 825 490 850 480 847C460 840 430 810 410 790M345 680C370 640 430 635 460 680C480 730 460 760 440 780M332 710C325 750 360 800 405 800M368 635L378 645" /><ellipse cx="355" cy="624" rx="12" ry="13" /><ellipse cx="472" cy="641" rx="15" ry="17" /><ellipse cx="306" cy="773" rx="15" ry="16" />
      </Sym>
    </defs>
  );
}

const frameTransform = (f: Frame) => `translate(${f.ox} ${f.oy}) scale(${f.sx} ${f.sy})`;

function Doodles() {
  return (
    <svg
      className="absolute inset-0 h-full w-full opacity-45 [&_*]:[vector-effect:non-scaling-stroke]"
      viewBox="0 0 1892 1528"
      fill="none"
      stroke="black"
      strokeWidth="2.1"
      strokeLinecap="round"
      strokeLinejoin="round"
      aria-hidden="true"
    >
      <Symbols />
      <g id="tile">
        {stars.map(([f, list]) =>
          list.map(([x, y, r, rot, twin], i) => (
            <g key={`s${f.ox}-${f.oy}-${i}`} transform={`translate(${px(f, x)} ${py(f, y)}) rotate(${rot})`}>
              <path d={starPath(r)} />
              {twin ? <path d={starPath(r * 0.5)} /> : null}
            </g>
          )),
        )}
        {dots.map(([f, list]) =>
          list.map(([x, y, r], i) => <circle key={`o${f.ox}-${f.oy}-${i}`} cx={px(f, x)} cy={py(f, y)} r={r ?? 8.2} />),
        )}
        {ovals.map(([f, list]) =>
          list.map(([x, y, a, b], i) => (
            <ellipse key={`e${f.ox}-${f.oy}-${i}`} cx={px(f, x)} cy={py(f, y)} rx={a * f.sx} ry={b * f.sy} />
          )),
        )}
        {pupils.map(([f, list]) =>
          list.map(([x, y, r], i) => <circle key={`p${f.ox}-${f.oy}-${i}`} cx={px(f, x)} cy={py(f, y)} r={r} fill="black" stroke="none" />),
        )}
        {lines.map(([f, d], i) => (
          <path key={`l${i}`} d={d} transform={frameTransform(f)} />
        ))}
        {dashes.map(([f, d], i) => (
          <path key={`d${i}`} d={d} transform={frameTransform(f)} strokeDasharray="6 5" />
        ))}
        {placed.map(([id, f, x, y, rot = 0, mirror], i) => (
          <use
            key={`u${i}`}
            href={`#${id}`}
            transform={`translate(${px(f, x)} ${py(f, y)}) rotate(${rot}) scale(${mirror ? -T : T} ${T})`}
          />
        ))}
        {mass.map(([f, x, y, rot], i) => (
          <text
            key={`m${i}`}
            transform={`translate(${px(f, x)} ${py(f, y)}) rotate(${rot})`}
            textAnchor="middle"
            y="11"
            fontSize="37"
            fontWeight="400"
            fontFamily="Lato, 'Open Sans', sans-serif"
            letterSpacing="0.6"
            fill="black"
            stroke="none"
          >
            Ɛ=mc²
          </text>
        ))}
      </g>
      <use href="#tile" x="1020" />
      <use href="#tile" x="-1020" />
    </svg>
  );
}

const palette = [
  { rgb: [122, 167, 139], x: 0.85, y: 0.15 },
  { rgb: [217, 220, 190], x: 0.2, y: -0.05 },
  { rgb: [145, 187, 138], x: 0.2, y: 0.85 },
  { rgb: [211, 215, 144], x: 1.0, y: 1.0 },
];

/* Four colour points blended by distance */
function GradientCanvas() {
  const ref = useRef<HTMLCanvasElement>(null);
  useEffect(() => {
    const ctx = ref.current?.getContext("2d");
    if (!ctx) return;
    const n = 80;
    const img = ctx.createImageData(n, n);
    for (let y = 0; y < n; y++) {
      for (let x = 0; x < n; x++) {
        let sum = 0;
        const c = [0, 0, 0];
        for (const p of palette) {
          const w = Math.max(0, 0.9 - Math.hypot(x / n - p.x, y / n - p.y)) ** 3;
          sum += w;
          for (let k = 0; k < 3; k++) c[k] += w * p.rgb[k];
        }
        const o = (y * n + x) * 4;
        for (let k = 0; k < 3; k++) img.data[o + k] = c[k] / sum;
        img.data[o + 3] = 255;
      }
    }
    ctx.putImageData(img, 0, 0);
  }, []);
  return <canvas ref={ref} width={80} height={80} className="absolute inset-0 h-full w-full" />;
}

function Tail({ side }: { side: "left" | "right" }) {
  return side === "right" ? (
    <svg className="absolute bottom-0 left-full h-[34px] w-[15px]" viewBox="0 0 15 34">
      <path d="M0 0C1 14 5 24 13.6 31.6Q15 34 12 34L0 34Z" fill="#e1f6c9" />
    </svg>
  ) : (
    <svg className="absolute right-full bottom-0 h-[34px] w-[15px]" viewBox="0 0 15 34">
      <path d="M15 0C14 14 10 24 1.4 31.6Q0 34 3 34L15 34Z" fill="white" />
    </svg>
  );
}

function Ticks() {
  return (
    <svg className="mb-[7px] ml-[5px] h-[20px] w-[33px]" viewBox="0 0 33 20" fill="none" stroke="#5fae5b" strokeWidth="2.6" strokeLinecap="round" strokeLinejoin="round">
      <path d="M1.5 11.5L7.5 18L22 2M15.5 16L17.5 18L31.5 2" />
    </svg>
  );
}

const bubbleText = "whitespace-pre text-[29px] leading-[39.375px] text-black";

export default function App() {
  return (
    <div className="flex h-screen w-full flex-col overflow-hidden bg-white font-['Inter','Liberation_Sans',sans-serif]">
      <header className="relative z-10 flex h-[114px] shrink-0 items-start border-t-2 border-[#f3e0da] bg-white shadow-[0_2px_4px_rgba(80,90,80,0.25)]">
        <div className="relative ml-[16px] mt-[36px] h-[40px] w-[40px]">
          <svg className="h-[40px] w-[40px]" viewBox="0 0 40 40" fill="none" stroke="#707579" strokeWidth="4" strokeLinecap="round" strokeLinejoin="round">
            <path d="M36 20H3M20 3L3 20L20 37" />
          </svg>
          <span className="absolute -top-[28px] left-[26px] flex h-[40px] w-[50px] items-center justify-center rounded-full bg-[#4f8de5] pt-px pr-px text-[24px] font-medium tracking-[-0.5px] text-white">21</span>
        </div>
        <div className="ml-[38px] mt-[16px] flex h-[80px] w-[80px] items-center justify-center rounded-full bg-linear-to-b from-[#eca777] to-[#e68446] pt-[3px] text-[33px] font-bold text-white">S</div>
        <div className="ml-[20px] mt-[20px] flex flex-col">
          <h1 className="text-[33px] font-semibold leading-[40px] text-black">Syllabus_Advisor</h1>
          <p className="pt-px text-[28px] leading-[36px] text-[#707579]">bot</p>
        </div>
      </header>

      <main className="relative isolate min-h-0 flex-1 overflow-hidden">
        <div className="absolute inset-0 -z-10">
          <GradientCanvas />
        </div>
        <div className="absolute inset-x-0 -top-[114px] -z-10 h-[1528px] mix-blend-soft-light">
          <Doodles />
        </div>
        <div className="ml-[398px] mr-[110px] mt-[12px] flex flex-col gap-[20px]">
          <div className="relative flex h-[62px] w-[773px] items-end self-end rounded-[30px] rounded-br-none bg-[#e1f6c9] pl-[16px] pr-[14px] shadow-[0_1px_3px_rgba(60,90,60,0.35)]">
            <p className={`${bubbleText} mb-[12px] tracking-[-0.06px]`}>I would like to know unit-wise distribution.</p>
            <span className="mb-[3px] ml-auto flex items-end text-[24px] leading-[34px] text-[#5fae5b]"><span>09:38 PM</span><Ticks /></span>
            <Tail side="right" />
          </div>

          <div className="relative h-[652px] w-[928px] rounded-[30px] rounded-bl-none bg-white px-[16px] pt-[11px] shadow-[0_1px_3px_rgba(60,90,60,0.35)]">
            <p className={bubbleText}>{`Here is the unit-wise mark distribution for Grade IX Maths (CBSE
2024-25):

- Number Systems: 10 marks
- Algebra: 20 marks
- Coordinate Geometry: 4 marks
- Geometry: 27 marks
- Mensuration: 13 marks
- Statistics: 6 marks

Total (written exam): 80 marks

If you need additional details for each unit or about internal
assessments, feel free to ask!

`}<span className="tracking-[-0.22px]"><em>This message was sent automatically with</em> </span><a className="text-[#4f8fe6]">n8n</a></p>
            <span className="absolute bottom-[3px] right-[20px] text-[24px] leading-[34px] text-[#8e9195]">09:38 PM</span>
            <Tail side="left" />
          </div>

          <div className="relative flex h-[99px] w-[960px] flex-col self-end rounded-[30px] rounded-br-none bg-[#e1f6c9] pl-[16px] pr-[14px] pt-[11px] shadow-[0_1px_3px_rgba(60,90,60,0.35)]">
            <p className={`${bubbleText} tracking-[-0.09px]`}>Can you help me with mark split up for grade X Science?</p>
            <span className="mb-px mt-auto flex items-end self-end text-[24px] leading-[34px] text-[#5fae5b]"><span>09:38 PM</span><Ticks /></span>
            <Tail side="right" />
          </div>

          <div className="h-[640px] w-[928px] rounded-[30px] bg-white px-[16px] pt-[11px]">
            <p className={bubbleText}>{`Here is the unit-wise mark split up for Grade X Science (CBSE
2024-25):

- Unit I: Chemical Substances – Nature and Behaviour – 25 marks
- Unit II: World of Living – 25 marks
- Unit III: Natural Phenomena – 12 marks
- Unit IV: Effects of Current – 13 marks
- Unit V: Natural Resources – 5 marks

Total for the written examination: 80 marks
Internal assessment: 20 marks

Grand Total: 100 marks`}</p>
          </div>
        </div>
      </main>
    </div>
  );
}
